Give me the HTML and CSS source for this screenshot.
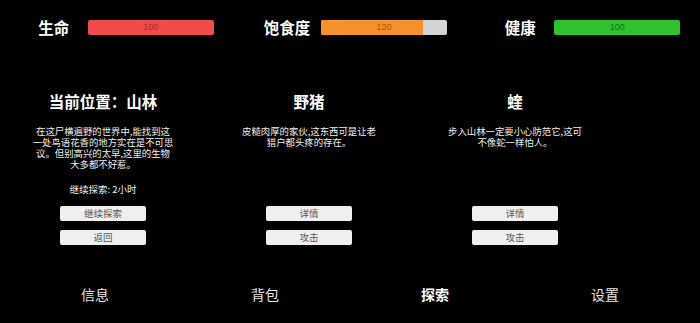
FILE: index.html
```html
<!DOCTYPE html>
<html lang="zh">
<head>
<meta charset="utf-8">
<title>探索</title>
<link rel="stylesheet" href="styles.css">
</head>
<body>
<div class="app">
  <div class="stats">
    <div class="stat">
      <span class="stat-label">生命</span>
      <div class="bar bar-red"><div class="fill" style="width:100%"></div><span class="bar-text">100</span></div>
    </div>
    <div class="stat">
      <span class="stat-label">饱食度</span>
      <div class="bar bar-orange"><div class="fill" style="width:81%"></div><span class="bar-text">120</span></div>
    </div>
    <div class="stat">
      <span class="stat-label">健康</span>
      <div class="bar bar-green"><div class="fill" style="width:100%"></div><span class="bar-text">100</span></div>
    </div>
  </div>

  <div class="cards">
    <div class="card">
      <div class="card-title">当前位置：山林</div>
      <p class="card-desc">在这尸横遍野的世界中,能找到这一处鸟语花香的地方实在是不可思议。但别高兴的太早,这里的生物大多都不好惹。</p>
      <div class="card-actions">
        <div class="status">继续探索: 2小时</div>
        <button class="btn">继续探索</button>
        <button class="btn">返回</button>
      </div>
    </div>
    <div class="card">
      <div class="card-title">野猪</div>
      <p class="card-desc">皮糙肉厚的家伙,这东西可是让老猎户都头疼的存在。</p>
      <div class="card-actions">
        <button class="btn">详情</button>
        <button class="btn">攻击</button>
      </div>
    </div>
    <div class="card">
      <div class="card-title">蝰</div>
      <p class="card-desc">步入山林一定要小心防范它,这可不像蛇一样怕人。</p>
      <div class="card-actions">
        <button class="btn">详情</button>
        <button class="btn">攻击</button>
      </div>
    </div>
  </div>

  <nav class="nav">
    <span class="nav-item">信息</span>
    <span class="nav-item">背包</span>
    <span class="nav-item active">探索</span>
    <span class="nav-item">设置</span>
  </nav>
</div>
</body>
</html>
```

FILE: styles.css
```css
html, body {
  margin: 0;
  padding: 0;
  background: #000;
}
body {
  width: 700px;
  height: 323px;
  overflow: hidden;
  font-family: "Noto Sans CJK SC", "Noto Sans", sans-serif;
  color: #f2f2f2;
}
.app {
  display: flex;
  flex-direction: column;
}
.stats {
  display: grid;
  grid-template-columns: repeat(3, 1fr);
  padding-top: 20px;
}
.stat {
  display: flex;
  justify-content: center;
  align-items: center;
  height: 15px;
}
.stat-label {
  width: 68px;
  text-align: center;
  font-size: 15.5px;
  font-weight: 700;
  line-height: 15px;
  color: #fff;
}
.bar {
  position: relative;
  width: 126px;
  height: 15px;
  border-radius: 2px;
  background: #d4d4d4;
  overflow: hidden;
}
.fill {
  height: 100%;
}
.bar-red .fill { background: #f24b4b; }
.bar-orange .fill { background: #f5912c; }
.bar-green .fill { background: #2fc22f; }
.bar-text {
  position: absolute;
  inset: 0;
  text-align: center;
  font-family: "Liberation Sans", sans-serif;
  font-size: 9px;
  line-height: 15px;
}
.bar-red .bar-text { color: #a42a2a; }
.bar-orange .bar-text { color: #a5561a; }
.bar-green .bar-text { color: #1a6e1a; }

.cards {
  display: grid;
  grid-template-columns: repeat(3, 206px);
  margin-top: 56px;
}
.card {
  display: flex;
  flex-direction: column;
  align-items: center;
  height: 154px;
}
.card-title {
  font-size: 15.5px;
  font-weight: 700;
  line-height: 20px;
  color: #fff;
}
.card-desc {
  margin: 15px 0 0;
  width: 143px;
  text-align: center;
  font-size: 9.4px;
  line-height: 11px;
  color: #f0f0f0;
}
.card-actions {
  margin-top: auto;
  display: flex;
  flex-direction: column;
  align-items: center;
  gap: 9px;
}
.status {
  font-size: 9.5px;
  line-height: 12px;
  margin-bottom: 2px;
  color: #eee;
}
.btn {
  width: 86px;
  height: 15px;
  padding: 0;
  border: none;
  border-radius: 2px;
  background: #efefef;
  color: #555;
  font-family: "Noto Sans CJK SC", sans-serif;
  font-size: 9.5px;
  line-height: 15px;
}
.nav {
  display: grid;
  grid-template-columns: repeat(4, 1fr);
  padding: 0 10px;
  margin-top: 39px;
}
.nav-item {
  text-align: center;
  font-size: 14px;
  line-height: 20px;
  color: #e6e6e6;
}
.nav-item.active {
  font-weight: 700;
  color: #fff;
}
```
